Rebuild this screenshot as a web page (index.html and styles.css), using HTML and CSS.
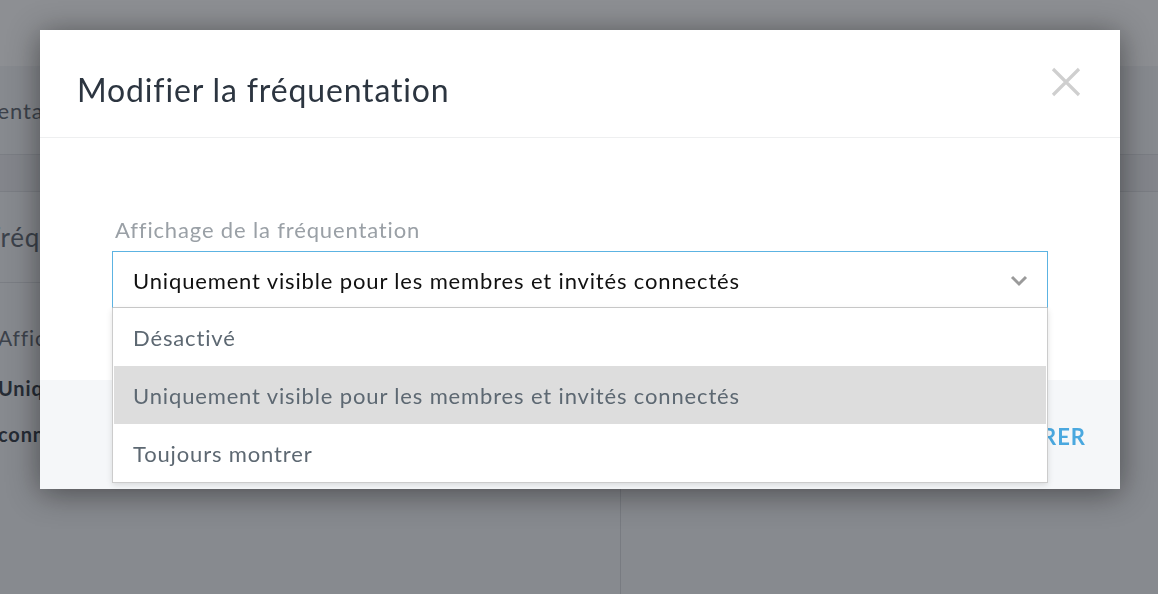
FILE: index.html
```html
<!DOCTYPE html>
<html lang="fr">
<head>
  <meta charset="UTF-8">
  <meta name="viewport" content="width=device-width, initial-scale=1.0">
  <title>Modifier la fréquentation</title>
  <link rel="stylesheet" href="styles.css">
</head>
<body>

  <div class="page">
    <div class="page-header"></div>
    <div class="page-body">
      <div class="left-col">
        <div class="row row-title"><span class="shift">Fréquentation</span></div>
        <div class="row-band"></div>
        <div class="row row-sub"><span class="shift2">Fréquentation</span></div>
        <div class="row-field">
          <div class="field-label"><span>Affichage de la fréquentation</span></div>
          <div class="field-value">Uniquement visible pour les membres et invités connectés</div>
        </div>
      </div>
      <div class="right-col">
        <div class="row row-title"></div>
        <div class="row-band"></div>
      </div>
    </div>
  </div>

  <div class="overlay">
    <div class="modal">
      <div class="modal-header">
        <h1 class="modal-title">Modifier la fréquentation</h1>
        <button class="modal-close" aria-label="Fermer">
          <svg width="32" height="32" viewBox="0 0 32 32">
            <path d="M3 3 L29 29 M29 3 L3 29" stroke="#cfcfcf" stroke-width="3.2" fill="none"/>
          </svg>
        </button>
      </div>
      <div class="modal-body">
        <label class="select-label">Affichage de la fréquentation</label>
        <div class="select">
          <div class="select-box">
            <span>Uniquement visible pour les membres et invités connectés</span>
            <svg class="chevron" width="18" height="12" viewBox="0 0 18 12">
              <path d="M2 2 L9 9 L16 2" stroke="#9a9a9a" stroke-width="3" fill="none"/>
            </svg>
          </div>
          <ul class="select-menu">
            <li>Désactivé</li>
            <li class="active">Uniquement visible pour les membres et invités connectés</li>
            <li>Toujours montrer</li>
          </ul>
        </div>
      </div>
      <div class="modal-footer">
        <button class="btn-save">ENREGISTRER</button>
      </div>
    </div>
  </div>

</body>
</html>
```

FILE: styles.css
```css
body {
  margin: 0;
  width: 1158px;
  height: 594px;
  overflow: hidden;
  font-family: Lato, "Open Sans", sans-serif;
  letter-spacing: 0.85px;
  color: #2e3640;
}
.page {
  height: 594px;
  background: #f1f2f4;
}
.page-header {
  height: 66px;
  background: #fdfdfd;
}
.page-body {
  display: flex;
  height: 528px;
}
.left-col {
  width: 620px;
  border-right: 1px solid #d3d5d9;
  overflow: hidden;
}
.right-col {
  flex: 1;
}
.row {
  display: flex;
  align-items: center;
  border-bottom: 1px solid #d8dade;
  overflow: hidden;
  white-space: nowrap;
}
.row-title {
  height: 88px;
  font-size: 22px;
  color: #5b636c;
}
.row-band {
  height: 36px;
  background: #e8e9ec;
  border-bottom: 1px solid #d8dade;
}
.row-sub {
  height: 90px;
  font-size: 26px;
  color: #5b636c;
}
.shift {
  margin-left: -62px;
}
.shift2 {
  margin-left: -14px;
}
.row-field {
  padding-top: 42px;
}
.field-label {
  font-size: 21px;
  color: #5b636c;
  margin-left: -2px;
  white-space: nowrap;
}
.field-value {
  font-size: 20px;
  font-weight: 700;
  color: #2e3640;
  margin-top: 15px;
  width: 560px;
  line-height: 46px;
  margin-left: -2px;
}

.overlay {
  position: fixed;
  top: 0;
  left: 0;
  right: 0;
  bottom: 0;
  background: rgba(30, 34, 42, 0.5);
  display: flex;
  justify-content: center;
  align-items: flex-start;
}
.modal {
  width: 1080px;
  margin-top: 30px;
  margin-left: 2px;
  background: #fff;
  box-shadow: 0 4px 30px rgba(0, 0, 0, 0.45);
}
.modal-header {
  height: 107px;
  display: flex;
  align-items: center;
  justify-content: space-between;
  padding: 0 37px;
  border-bottom: 1px solid #eeeff0;
}
.modal-title {
  margin: 0;
  font-size: 32px;
  font-weight: 400;
  color: #2c3540;
  margin-top: 11px;
}
.modal-close {
  border: 0;
  background: none;
  padding: 0;
  margin-right: 1px;
  margin-top: 0;
  cursor: pointer;
}
.modal-body {
  padding: 78px 72px 72px;
}
.select-label {
  display: block;
  font-size: 22px;
  color: #9aa0a6;
  margin-left: 3px;
  margin-bottom: 8px;
}
.select {
  position: relative;
}
.select-box {
  height: 55px;
  border: 1px solid #5cb3e2;
  border-bottom-color: #cccccc;
  display: flex;
  align-items: center;
  justify-content: space-between;
  padding: 2px 19px 0 20px;
  box-sizing: border-box;
  height: 57px;
  font-size: 22px;
  color: #111;
}
.chevron {
  margin-top: 1px;
}
.select-menu {
  position: absolute;
  top: 57px;
  left: 0;
  right: 0;
  margin: 0;
  padding: 0 1px;
  list-style: none;
  background: #fff;
  border: 1px solid #cccccc;
  border-top: 0;
  box-shadow: 0 2px 6px rgba(0, 0, 0, 0.12);
  z-index: 2;
}
.select-menu li {
  height: 58px;
  line-height: 60px;
  padding-left: 19px;
  font-size: 22px;
  color: #5d6872;
}
.select-menu li.active {
  background: #dddddd;
}
.modal-footer {
  height: 109px;
  background: #f5f7f9;
  display: flex;
  align-items: center;
  justify-content: flex-end;
  padding: 0 36px;
}
.btn-save {
  border: 0;
  background: none;
  font-family: inherit;
  font-size: 22px;
  font-weight: 700;
  letter-spacing: 1px;
  color: #4aa8df;
  padding: 0;
  margin-top: 4px;
  margin-right: -2px;
  cursor: pointer;
}
```
